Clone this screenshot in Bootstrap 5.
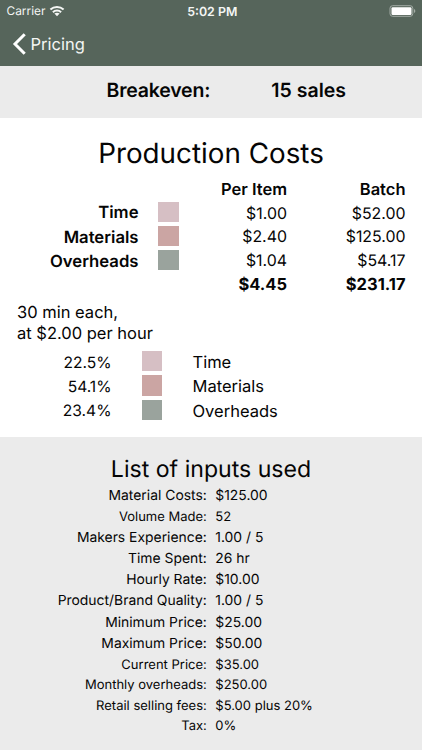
<!DOCTYPE html>
<html lang="en">
<head>
<meta charset="utf-8">
<meta name="viewport" content="width=device-width, initial-scale=1">
<title>Production Costs</title>
<link href="https://cdn.jsdelivr.net/npm/bootstrap@5.3.0/dist/css/bootstrap.min.css" rel="stylesheet">
<style>
  body { font-family: Inter, "Liberation Sans", sans-serif; color: #050505; background: #ebebeb; font-size: 16.5px; text-rendering: geometricPrecision; }
  .top-area { background: #56655b; height: 65.5px; color: #f4f6f4; }
  .status-bar { height: 22px; font-size: 11.9px; padding: 0 6px 0 6.5px; display: grid; grid-template-columns: 1fr auto 1fr; }
  .status-time { font-size: 12.4px; padding: 2px 0 0 2px; }
  .back-link { height: 43px; padding: 0 0 0 12px; font-size: 16.5px; gap: 4.5px; }
  .back-link span { padding-top: 2px; }
  .breakeven { height: 52.5px; background: #ebebeb; padding: 0 76px 2px 106.5px; font-size: 19.5px; }
  .breakeven-label { letter-spacing: -.2px; }
  .costs { height: 318.5px; padding-top: 17px; }
  .page-title { font-size: 27.8px; line-height: 36px; }
  .cost-grid { padding: 6.5px 16.5px 0 0; height: 119px; }
  .cost-labels { width: 138.5px; padding-top: 23.6px; font-size: 16.7px; }
  .swatch-col { width: 20.5px; gap: 4px; }
  .swatch { width: 20.5px; height: 20.3px; }
  .cost-swatches { margin: 24px 0 0 19.5px; }
  .cost-labels div, .share div div { line-height: 24.4px; }
  .amounts { padding-top: .3px; }
  .amounts div { line-height: 23.8px; }
  .per-item { width: 108.5px; }
  .batch { width: 118.5px; }
  .num { font-size: 15.9px; }
  .note { padding: 12.3px 0 0 17px; line-height: 20.8px; }
  .share { padding-top: 5.9px; }
  .percents { padding-top: .8px; }
  .percents { width: 111.5px; font-size: 15.6px; }
  .share-swatches { margin: 1.4px 30.5px 0 30px; }
  .tone-time { background: #d6bfc4; }
  .tone-materials { background: #cba5a3; }
  .tone-overheads { background: #9aa39d; }
  .inputs { height: 313px; background: #ebebeb; padding-top: 16px; }
  .inputs-title { font-size: 23.1px; line-height: 32px; margin-bottom: 1.5px; }
  .input-row { font-size: 13.9px; line-height: 21.25px; }
  .input-row.compact { font-size: 13px; line-height: 20.35px; }
  .input-name { width: 206.8px; }
  .input-value { padding-left: 8.5px; }
</style>
<script src="https://cdn.jsdelivr.net/npm/bootstrap@5.3.0/dist/js/bootstrap.bundle.min.js"></script>
</head>
<body class="overflow-hidden">
<header class="top-area">
  <div class="status-bar align-items-center">
    <div class="d-flex align-items-center">
      <span>Carrier</span>
      <svg class="ms-1" width="16" height="12" viewBox="0 0 16 12" fill="none" stroke="currentColor" stroke-width="2">
        <path d="M1.400 4.500C5.100 1 10.900 1 14.600 4.500"/><path d="M3.900 7.200C6.200 5 9.800 5 12.100 7.200"/><path d="M8 11.200 5.400 8.600C6.800 7.300 9.200 7.300 10.600 8.600Z" fill="currentColor" stroke="none"/>
      </svg>
    </div>
    <span class="status-time fw-semibold">5:02 PM</span>
    <svg class="ms-auto" width="27" height="12" viewBox="0 0 27 12">
      <rect x="1" y=".7" width="22.800" height="10.600" rx="2.600" fill="none" stroke="#a3aca6"/>
      <rect x="2.500" y="2.200" width="20" height="7.700" rx="1.200" fill="#fff"/>
      <path d="M25 4v4c1.800-.7 1.800-3.300 0-4z" fill="#a3aca6"/>
    </svg>
  </div>
  <nav class="back-link d-flex align-items-center">
    <svg width="14" height="22" viewBox="0 0 14 22" fill="none" stroke="#fff" stroke-width="3"><path d="M12.700 1.200 3 11l9.700 9.800"/></svg>
    <span>Pricing</span>
  </nav>
</header>

<section class="breakeven d-flex justify-content-between align-items-center fw-semibold">
  <span class="breakeven-label">Breakeven:</span><span>15 sales</span>
</section>

<main class="costs bg-white">
  <h1 class="page-title text-center fw-normal mb-0">Production Costs</h1>
  <div class="cost-grid d-flex">
    <div class="cost-labels text-end fw-semibold">
      <div>Time</div><div>Materials</div><div>Overheads</div>
    </div>
    <div class="swatch-col cost-swatches d-flex flex-column">
      <div class="swatch tone-time"></div><div class="swatch tone-materials"></div><div class="swatch tone-overheads"></div>
    </div>
    <div class="amounts d-flex text-end">
      <div class="per-item">
        <div class="fw-semibold">Per Item</div><div class="num">$1.00</div><div class="num">$2.40</div><div class="num">$1.04</div><div class="fw-bold">$4.45</div>
      </div>
      <div class="batch">
        <div class="fw-semibold">Batch</div><div class="num">$52.00</div><div class="num">$125.00</div><div class="num">$54.17</div><div class="fw-bold">$231.17</div>
      </div>
    </div>
  </div>
  <div class="note">30 min each,<br>at $2.00 per hour</div>
  <div class="share d-flex">
    <div class="percents text-end"><div>22.5%</div><div>54.1%</div><div>23.4%</div></div>
    <div class="swatch-col share-swatches d-flex flex-column">
      <div class="swatch tone-time"></div><div class="swatch tone-materials"></div><div class="swatch tone-overheads"></div>
    </div>
    <div class="share-names"><div>Time</div><div>Materials</div><div>Overheads</div></div>
  </div>
</main>

<section class="inputs">
  <h2 class="inputs-title text-center fw-normal">List of inputs used</h2>
  <div class="input-row d-flex"><div class="input-name text-end">Material Costs:</div><div class="input-value">$125.00</div></div>
  <div class="input-row compact d-flex"><div class="input-name text-end">Volume Made:</div><div class="input-value">52</div></div>
  <div class="input-row d-flex"><div class="input-name text-end">Makers Experience:</div><div class="input-value">1.00 / 5</div></div>
  <div class="input-row d-flex"><div class="input-name text-end">Time Spent:</div><div class="input-value">26 hr</div></div>
  <div class="input-row d-flex"><div class="input-name text-end">Hourly Rate:</div><div class="input-value">$10.00</div></div>
  <div class="input-row d-flex"><div class="input-name text-end">Product/Brand Quality:</div><div class="input-value">1.00 / 5</div></div>
  <div class="input-row d-flex"><div class="input-name text-end">Minimum Price:</div><div class="input-value">$25.00</div></div>
  <div class="input-row d-flex"><div class="input-name text-end">Maximum Price:</div><div class="input-value">$50.00</div></div>
  <div class="input-row compact d-flex"><div class="input-name text-end">Current Price:</div><div class="input-value">$35.00</div></div>
  <div class="input-row compact d-flex"><div class="input-name text-end">Monthly overheads:</div><div class="input-value">$250.00</div></div>
  <div class="input-row compact d-flex"><div class="input-name text-end">Retail selling fees:</div><div class="input-value">$5.00 plus 20%</div></div>
  <div class="input-row compact d-flex"><div class="input-name text-end">Tax:</div><div class="input-value">0%</div></div>
</section>
</body>
</html>
